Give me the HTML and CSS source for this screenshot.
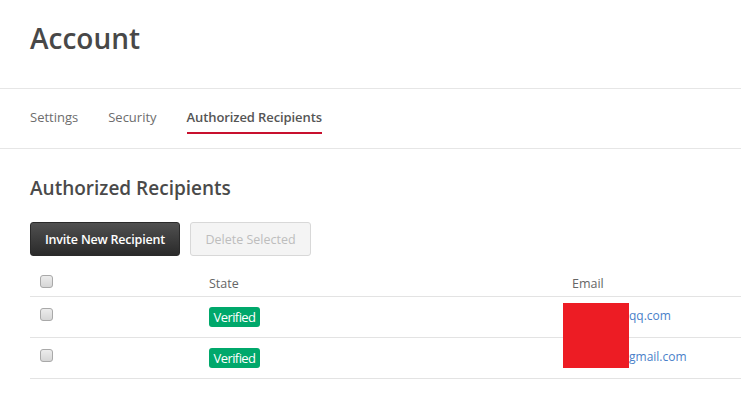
FILE: index.html
```html
<!DOCTYPE html>
<html>
<head>
<meta charset="utf-8">
<link rel="stylesheet" href="styles.css">
</head>
<body>
<header class="page-head">
  <h1>Account</h1>
</header>
<nav class="tabs">
  <a class="tab">Settings</a>
  <a class="tab">Security</a>
  <a class="tab active">Authorized Recipients</a>
</nav>
<main class="content">
  <h2>Authorized Recipients</h2>
  <div class="actions">
    <button class="btn btn-dark">Invite New Recipient</button>
    <button class="btn btn-disabled" disabled>Delete Selected</button>
  </div>
  <table class="recipients">
    <thead>
      <tr>
        <th class="c-check"><span class="check"></span></th>
        <th class="c-state">State</th>
        <th class="c-email">Email</th>
      </tr>
    </thead>
    <tbody>
      <tr>
        <td class="c-check"><span class="check"></span></td>
        <td class="c-state"><span class="badge">Verified</span></td>
        <td class="c-email"><span class="mail"><span class="redact"></span><a><span class="local">xxxxxxxx@</span>qq.com</a></span></td>
      </tr>
      <tr>
        <td class="c-check"><span class="check"></span></td>
        <td class="c-state"><span class="badge">Verified</span></td>
        <td class="c-email"><span class="mail"><a><span class="local">xxxxxxx@</span>gmail.com</a></span></td>
      </tr>
    </tbody>
  </table>
</main>
</body>
</html>
```
FILE: styles.css
```css
* { box-sizing: border-box; }
html, body { margin: 0; padding: 0; background: #fff; }
body {
  font-family: "Open Sans", "Liberation Sans", sans-serif;
  color: #4a4a4a;
  overflow: hidden;
}
.page-head {
  height: 89px;
  padding: 18px 30px 0;
  border-bottom: 1px solid #e6e6e6;
}
.page-head h1 {
  margin: 0;
  font-size: 28px;
  font-weight: 600;
  color: #484848;
  line-height: 40px;
}
.tabs {
  height: 60px;
  border-bottom: 1px solid #e6e6e6;
  padding: 0 30px;
  display: flex;
  gap: 30px;
  align-items: flex-start;
}
.tab {
  font-size: 13px;
  color: #6d6d6d;
  padding-top: 18px;
  padding-bottom: 5px;
  line-height: 20px;
  border-bottom: 2px solid transparent;
}
.tab.active {
  font-weight: 600;
  color: #555;
  letter-spacing: -0.1px;
  border-bottom-color: #c8102e;
}
.content { padding: 26px 0 0 30px; }
.content h2 {
  margin: 0;
  font-size: 19px;
  font-weight: 600;
  color: #4a4a4a;
  line-height: 26px;
}
.actions {
  display: flex;
  gap: 10px;
  margin-top: 21px;
}
.btn {
  font-family: inherit;
  font-size: 12.5px;
  height: 34px;
  border-radius: 3px;
  padding: 0 6px;
  white-space: nowrap;
}
.btn-dark {
  width: 150px;
  color: #fff;
  background: linear-gradient(#505050, #2a2a2a);
  border: 1px solid #2a2a2a;
  font-weight: 600;
  letter-spacing: -0.2px;
}
.btn-disabled {
  width: 121px;
  color: #bdbdbd;
  background: #f4f4f4;
  border: 1px solid #d8d8d8;
}
.recipients {
  border-collapse: collapse;
  width: 711px;
  margin-top: 9px;
  font-size: 12.5px;
}
.recipients th, .recipients td {
  border-bottom: 1px solid #e3e3e3;
  text-align: left;
  vertical-align: top;
  padding: 0 10px;
}
.recipients th {
  font-weight: 400;
  color: #666;
  height: 31px;
  padding-top: 10px;
}
.recipients td { height: 41px; padding-top: 10px; }
.recipients .c-check { width: 169px; }
.recipients .c-state { width: 363px; }
.check {
  display: block;
  width: 13px;
  height: 13px;
  border: 1px solid #a9a9a9;
  border-radius: 3px;
  background: linear-gradient(#ececec, #d6d6d6);
  margin-top: 1px;
}
.recipients th .check { margin-top: 0; }
.badge {
  display: inline-block;
  width: 51px;
  text-align: center;
  background: #00a86b;
  color: #fff;
  font-size: 13px;
  font-weight: 400;
  line-height: 20px;
  border-radius: 3px;
  letter-spacing: -0.6px;
}
.mail { position: relative; display: inline-block; }
.mail a { color: #4a7fc9; font-size: 12px; white-space: nowrap; }
.local {
  display: inline-block;
  width: 57px;
  overflow: hidden;
  vertical-align: top;
}
.redact {
  position: absolute;
  left: -9px;
  top: -4px;
  width: 66px;
  height: 65px;
  background: #ed1c24;
  z-index: 2;
}
```
